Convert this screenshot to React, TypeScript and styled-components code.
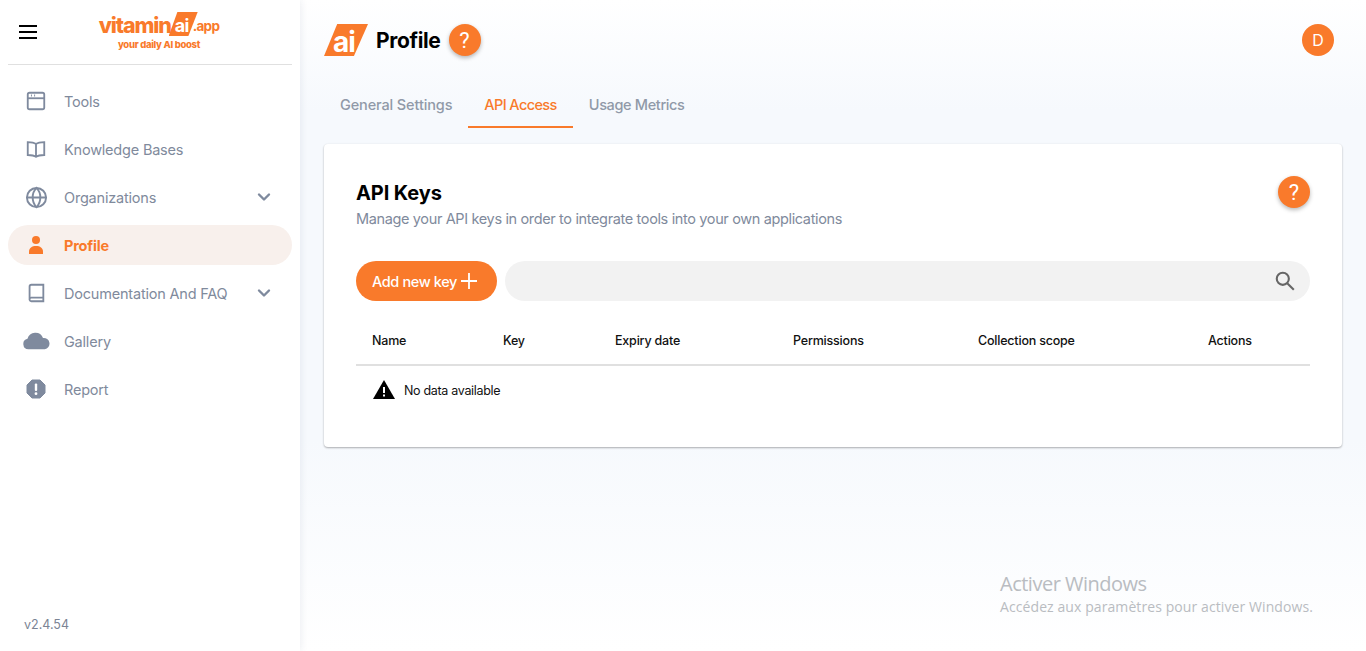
import React from "react";
import styled, { createGlobalStyle } from "styled-components";

const Global = createGlobalStyle`
  html, body { margin: 0; padding: 0; height: 100%; overflow: hidden; }
  body { font-family: Inter, "Noto Sans", sans-serif; background: #fff; }
  #root { height: 100%; }
  * { box-sizing: border-box; }
`;
const ORANGE = "#f97a2b";
const Page = styled.div`display: flex; height: 651px; width: 1366px; position: relative;`;
const Sidebar = styled.aside`
  width: 300px; flex: none; background: #fff; display: flex; flex-direction: column; padding: 0 8px;
  box-shadow: 0 0 8px rgba(30,50,90,.10); position: relative; z-index: 1;
`;
const SideHeader = styled.div`
  height: 65px; flex: none; display: flex; align-items: flex-start; border-bottom: 1px solid #e0e0e0;
`;
const Burger = styled.button`
  border: 0; background: none; padding: 0; width: 18px; height: 14px; margin: 25px 0 0 11px; display: flex; flex-direction: column; justify-content: space-between;
  span { display: block; height: 2px; background: #000; }
`;
const Logo = styled.div`
  margin: 12px 0 0 63px; width: 118px; display: flex; flex-direction: column; align-items: center; color: ${ORANGE};
`;
const LogoTop = styled.div`display: flex; align-items: flex-end; height: 24px; white-space: nowrap;`;
const LogoWord = styled.span`font-size: 21.5px; font-weight: 800; letter-spacing: -1.15px; line-height: 24px; margin-bottom: -1px;`;
const AiLogo = styled.span`
  width: 29px; height: 24px; margin: 0 -5px 0 -2px; background: ${ORANGE}; color: #fff; clip-path: polygon(30% 0, 100% 0, 68% 100%, 0 100%);
  font-size: 18px; font-weight: 700; line-height: 28px; padding-left: 6px; letter-spacing: -.5px;
`;
const LogoApp = styled.span`font-size: 13.5px; font-weight: 700; letter-spacing: -.7px; line-height: 20px;`;
const LogoTag = styled.span`font-size: 9.5px; font-weight: 800; letter-spacing: -.3px; line-height: 12px; margin-top: 3px;`;
const Nav = styled.nav`display: flex; flex-direction: column; gap: 8px; padding-top: 16px;`;
const Row = styled.div<{ $active?: boolean }>`
  height: 40px; border-radius: 20px; display: flex; align-items: center; padding: 0 16px;
  background: ${p => (p.$active ? "#f8f0ec" : "transparent")};
  color: ${p => (p.$active ? ORANGE : "#808a9c")};
  font-size: 14.5px; font-weight: ${p => (p.$active ? 700 : 400)}; letter-spacing: -.2px;
  svg { flex: none; }
`;
const IconSlot = styled.span`width: 24px; height: 24px; flex: none; display: flex; align-items: center; justify-content: center; margin-right: 16px;`;
const Grow = styled.span`flex: 1;`;
const Version = styled.div`margin-top: auto; padding: 0 0 18px 16px; font-size: 12.5px; color: #7b8494; line-height: 16px;`;
const Main = styled.main`
  flex: 1; min-width: 0; display: flex; flex-direction: column; padding: 0 24px;
  background: linear-gradient(180deg, #fff 0, #f6f9fd 110px, #f6f9fd 440px, #fff 651px);
`;
const Top = styled.div`height: 80px; display: flex; align-items: center; flex: none;`;
const AiMark = styled.div`
  width: 44px; height: 32px; flex: none; margin-right: 8px; background: ${ORANGE};
  clip-path: polygon(30% 0, 100% 0, 68% 100%, 0 100%);
  color: #fff; font-size: 28px; font-weight: 700; letter-spacing: -1px; line-height: 37px; padding-left: 9px;
`;
const PageTitle = styled.h1`margin: 0 8px 0 0; font-size: 21px; font-weight: 700; color: #000; letter-spacing: -.35px;`;
const Help = styled.div`
  width: 32px; height: 32px; flex: none; border-radius: 50%; background: ${ORANGE}; color: #fff; display: flex; align-items: center; justify-content: center;
  font-size: 22px; font-weight: 400; box-shadow: 0 2px 4px rgba(0,0,0,.28); font-family: Roboto, sans-serif;
`;
const Avatar = styled.div`
  width: 32px; height: 32px; margin-left: auto; margin-right: 8px; border-radius: 50%; background: ${ORANGE}; color: #fff; display: flex; align-items: center; justify-content: center; font-size: 16px;
`;
const Tabs = styled.div`display: flex; height: 48px; flex: none;`;
const Tab = styled.div<{ $active?: boolean; $spacing: number }>`
  padding: 2px 16px 0; display: flex; align-items: center; font-size: 14.5px; letter-spacing: ${p => p.$spacing}px; font-weight: 500;
  color: ${p => (p.$active ? ORANGE : "#9099a8")};
  border-bottom: 2px solid ${p => (p.$active ? ORANGE : "transparent")};
`;
const Card = styled.section`
  margin-top: 16px; height: 303px; background: #fff; border-radius: 4px; padding: 32px; flex: none;
  box-shadow: 0 1px 2px rgba(0,0,0,.3), 0 0 3px rgba(0,0,0,.03);
`;
const CardHead = styled.div`display: flex; justify-content: space-between; align-items: flex-start; height: 53px;`;
const CardTitle = styled.h2`margin: 4px 0 0; font-size: 20px; font-weight: 700; color: #000; line-height: 26px; letter-spacing: -.1px;`;
const CardSub = styled.p`margin: 3px 0 0; font-size: 14.5px; color: #808a9c; line-height: 20px; letter-spacing: -.36px;`;
const Tools = styled.div`display: flex; gap: 8px; margin-top: 32px;`;
const AddBtn = styled.button`
  border: 0; height: 40px; width: 141px; flex: none; border-radius: 20px; background: ${ORANGE}; color: #fff; font: 500 14.5px Inter, sans-serif; letter-spacing: -.38px;
  display: flex; align-items: center; gap: 2px; padding: 0 0 0 16px;
`;
const Search = styled.div`
  flex: 1; height: 40px; border-radius: 20px; background: #f2f2f2; display: flex; align-items: center; justify-content: flex-end; padding-right: 14px;
`;
const Table = styled.div`margin-top: 20px;`;
const Cols = styled.div`display: grid; grid-template-columns: 131px 112px 178px 185px 230px 1fr; height: 45px; align-items: center; padding-left: 16px; border-bottom: 2px solid #e0e0e0; padding-bottom: 4px;`;
const Col = styled.div`font-size: 12.5px; font-weight: 500; color: #111; letter-spacing: -.2px;`;
const Empty = styled.div`display: flex; align-items: center; gap: 8px; padding: 12px 0 0 16px; font-size: 12.5px; color: #111; letter-spacing: -.32px;`;
const Watermark = styled.div`
  position: absolute; left: 1000px; top: 571px; color: #b9bcc1; font-family: "Open Sans", sans-serif; font-size: 14px; line-height: 21px; letter-spacing: .09px;
  strong { display: block; font-weight: 400; font-size: 20px; line-height: 25px; letter-spacing: -.5px; }
`;

const S = { width: 22, height: 22, viewBox: "0 0 24 24", fill: "none", stroke: "#7f8a9e", strokeWidth: 2 } as const;
const F = { width: 24, height: 24, viewBox: "0 0 24 24", fill: "#7f8a9e" } as const;
const Chev = () => (
  <svg width="24" height="24" viewBox="0 0 24 24" fill="none" stroke="#7f8a9e" strokeWidth="2.400" strokeLinecap="round" strokeLinejoin="round"><path d="M7 9.500 12 14.500l5-5" /></svg>
);
const items: { label: string; icon: React.ReactNode; chev?: boolean; active?: boolean }[] = [
  { label: "Tools", icon: <svg {...S}><rect x="3" y="3" width="18" height="18" rx="2" /><path d="M3 9h18" /><path d="M6.500 6h1M10 6h1" /></svg> },
  { label: "Knowledge Bases", icon: <svg {...S}><path d="M12 6.500C10 5 7 4.500 3 4.500v14c4 0 7 .5 9 2 2-1.500 5-2 9-2v-14c-4 0-7 .5-9 2Zm0 0v14" /></svg> },
  { label: "Organizations", chev: true, icon: <svg {...S} width={23} height={23}><circle cx="12" cy="12" r="10" /><path d="M2 12h20M12 2c3 3 4 6.500 4 10s-1 7-4 10c-3-3-4-6.500-4-10s1-7 4-10Z" /></svg> },
  { label: "Profile", active: true, icon: <svg width="24" height="24" viewBox="0 0 24 24" fill={ORANGE}><circle cx="12" cy="7" r="4" /><path d="M5 21v-2.500C5 15 8 13 12 13s7 2 7 5.500V21Z" /></svg> },
  { label: "Documentation And FAQ", chev: true, icon: <svg {...S}><path d="M5 19.500V5a2 2 0 0 1 2-2h13v18H7a2 2 0 0 1-2-1.500Zm0 0A2 2 0 0 1 7 17h13" /></svg> },
  { label: "Gallery", icon: <svg {...F} width={28} height={28}><path d="M19.500 19H5.500a4.500 4.500 0 0 1-.8-8.900A7 7 0 0 1 18 9.500 4.800 4.800 0 0 1 19.500 19Z" /></svg> },
  { label: "Report", icon: <svg {...F}><path d="M8 3h8l5 5v8l-5 5H8l-5-5V8Z" strokeLinejoin="round" stroke="#7f8a9e" strokeWidth="1" /><rect x="10.800" y="6.500" width="2.400" height="7.500" rx="1" fill="#fff" /><circle cx="12" cy="16.700" r="1.400" fill="#fff" /></svg> },
];
const columns = ["Name", "Key", "Expiry date", "Permissions", "Collection scope", "Actions"];

export default function App() {
  return (
    <Page>
      <Global />
      <Sidebar>
        <SideHeader>
          <Burger aria-label="menu"><span /><span /><span /></Burger>
          <Logo>
            <LogoTop>
              <LogoWord>vitamin</LogoWord>
              <AiLogo>ai</AiLogo>
              <LogoApp>.app</LogoApp>
            </LogoTop>
            <LogoTag>your daily AI boost</LogoTag>
          </Logo>
        </SideHeader>
        <Nav>
          {items.map(i => (
            <Row key={i.label} $active={i.active}>
              <IconSlot>{i.icon}</IconSlot>
              <span>{i.label}</span>
              {i.chev && <><Grow /><Chev /></>}
            </Row>
          ))}
        </Nav>
        <Version>v2.4.54</Version>
      </Sidebar>
      <Main>
        <Top>
          <AiMark>ai</AiMark>
          <PageTitle>Profile</PageTitle>
          <Help>?</Help>
          <Avatar>D</Avatar>
        </Top>
        <Tabs>
          <Tab $spacing={-0.13}>General Settings</Tab>
          <Tab $active $spacing={-0.6}>API Access</Tab>
          <Tab $spacing={-0.36}>Usage Metrics</Tab>
        </Tabs>
        <Card>
          <CardHead>
            <div>
              <CardTitle>API Keys</CardTitle>
              <CardSub>Manage your API keys in order to integrate tools into your own applications</CardSub>
            </div>
            <Help>?</Help>
          </CardHead>
          <Tools>
            <AddBtn>Add new key
              <svg width="20" height="20" viewBox="0 0 20 20" stroke="#fff" strokeWidth="1.800" fill="none"><path d="M10 2v16M2 10h16" /></svg>
            </AddBtn>
            <Search>
              <svg width="22" height="22" viewBox="0 0 20 20" fill="none" stroke="#666" strokeWidth="1.900"><circle cx="8" cy="8" r="5.500" /><path d="m12 12 6 6" /></svg>
            </Search>
          </Tools>
          <Table>
            <Cols>{columns.map(c => <Col key={c}>{c}</Col>)}</Cols>
            <Empty>
              <svg width="24" height="24" viewBox="0 0 24 24"><path d="M1 21 12 2l11 19Z" fill="#000" /><rect x="11" y="9" width="2" height="6" fill="#fff" /><rect x="11" y="16.500" width="2" height="2" fill="#fff" /></svg>
              No data available
            </Empty>
          </Table>
        </Card>
      </Main>
      <Watermark><strong>Activer Windows</strong>Accédez aux paramètres pour activer Windows.</Watermark>
    </Page>
  );
}
